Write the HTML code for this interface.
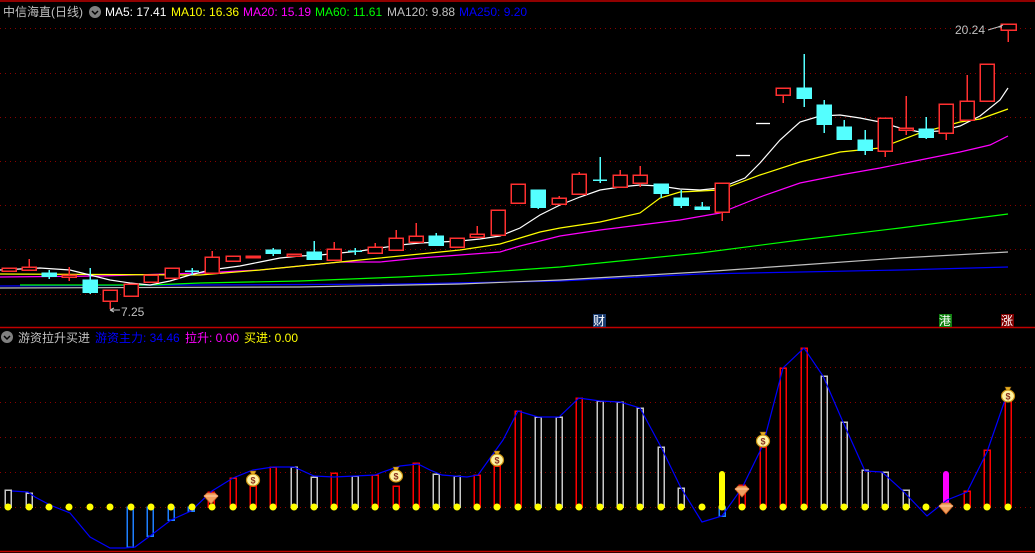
<!DOCTYPE html>
<html><head><meta charset="utf-8"><style>
html,body{margin:0;padding:0;background:#000;width:1035px;height:553px;overflow:hidden}
svg{display:block}
text{font-family:"Liberation Sans","Noto Sans CJK SC",sans-serif;font-size:12px}
</style></head><body>
<svg width="1035" height="553" viewBox="0 0 1035 553" xmlns="http://www.w3.org/2000/svg">
<defs>
<g id="bag"><path d="M-3,-9 L3,-9 L1.5,-6 L-1.5,-6 Z" fill="#e8b020" stroke="#8a5a10" stroke-width="0.6"/><ellipse cx="0" cy="0" rx="6.5" ry="6" fill="#fff3a0" stroke="#c89010" stroke-width="1.2"/><text x="0" y="3.5" text-anchor="middle" fill="#8a3020" style="font-size:9px;font-weight:bold">$</text></g>
<g id="dia"><path d="M-7,-3 L-4,-6 L4,-6 L7,-3 L0,5 Z" fill="#f0a060" stroke="#d06020" stroke-width="0.8"/><path d="M-7,-3 L7,-3" stroke="#ffd0a0" stroke-width="1"/></g>
</defs>
<line x1="0" y1="1" x2="1035" y2="1" stroke="#c00000" stroke-width="1.5"/>
<line x1="0" y1="327.5" x2="1035" y2="327.5" stroke="#c00000" stroke-width="1.5"/>
<line x1="0" y1="551.5" x2="1035" y2="551.5" stroke="#c00000" stroke-width="1.5"/>
<g stroke="#8a0000" stroke-width="1" stroke-dasharray="1,4">
<line x1="0" y1="28.5" x2="1035" y2="28.5"/><line x1="0" y1="73.5" x2="1035" y2="73.5"/><line x1="0" y1="117.5" x2="1035" y2="117.5"/><line x1="0" y1="161.5" x2="1035" y2="161.5"/><line x1="0" y1="205.5" x2="1035" y2="205.5"/><line x1="0" y1="249.5" x2="1035" y2="249.5"/><line x1="0" y1="294.5" x2="1035" y2="294.5"/>
<line x1="0" y1="367.5" x2="1035" y2="367.5"/><line x1="0" y1="402.5" x2="1035" y2="402.5"/><line x1="0" y1="437.5" x2="1035" y2="437.5"/><line x1="0" y1="472.5" x2="1035" y2="472.5"/><line x1="0" y1="507.5" x2="1035" y2="507.5"/>
</g>
<text x="3" y="16" fill="#c0c0c0">中信海直(日线)</text>
<circle cx="95" cy="12" r="6" fill="#808080"/><path d="M92,11 L95,14 L98,11" stroke="#000" stroke-width="1.5" fill="none"/>
<text x="105" y="16" fill="#fff">MA5: 17.41</text>
<text x="171" y="16" fill="#ffff00">MA10: 16.36</text>
<text x="243" y="16" fill="#ff00ff">MA20: 15.19</text>
<text x="315" y="16" fill="#00ff00">MA60: 11.61</text>
<text x="387" y="16" fill="#c0c0c0">MA120: 9.88</text>
<text x="459" y="16" fill="#0000ff">MA250: 9.20</text>
<g fill="none" stroke-width="1.2">
<polyline stroke="#0000ff" points="0,286 200,285 400,284 560,281 700,274 800,272 900,270 1008,267"/>
<polyline stroke="#c0c0c0" points="0,288 300,287 460,284 560,280 700,272 800,265 900,258 1008,252"/>
<polyline stroke="#00ff00" points="20,285 150,285 200,283 300,281 400,277 460,274 560,267 700,253 800,240 900,228 1008,214"/>
<polyline stroke="#ff00ff" points="0,277 100,276 200,273 260,270 300,266 340,262 380,262 420,258 460,255 500,252 520,246 560,236 600,230 640,225 680,220 720,213 760,197 800,183 840,175 880,168 920,160 960,152 990,145 1008,136"/>
<polyline stroke="#ffff00" points="0,274 200,275 260,270 300,266 340,262 380,258 420,254 460,250 500,244 520,238 540,232 560,228 600,222 640,213 660,198 680,192 720,190 760,175 800,162 840,152 880,148 920,133 960,122 980,119 1008,109"/>
<polyline stroke="#ffffff" points="0,270 40,268 70,270 90,275 110,280 130,283 150,285 170,281 190,275 210,270 240,266 260,262 280,258 300,256 320,255 340,253 360,251 380,248 400,245 420,243 440,242 460,241 480,239 500,236 520,228 540,215 560,205 580,197 600,190 620,187 640,185 660,186 680,189 700,190 720,188 745,178 760,163 780,140 800,122 820,116 840,115 860,118 880,122 900,128 920,132 940,131 960,126 980,116 1000,100 1008,88"/>
</g>
<g stroke="#ff3030" stroke-width="1.5" fill="#000" shape-rendering="crispEdges">
<rect x="2" y="268" width="14" height="3"/>
<line x1="29" y1="259" x2="29" y2="267"/><rect x="22" y="267" width="14" height="3"/>
<line x1="69" y1="267" x2="69" y2="281"/><rect x="62" y="275" width="14" height="2"/>
<line x1="110" y1="301" x2="110" y2="309"/><rect x="103" y="290" width="14" height="11"/>
<rect x="124" y="284" width="14" height="12"/>
<rect x="144" y="275" width="14" height="7"/>
<rect x="165" y="268" width="14" height="10"/>
<line x1="212" y1="251" x2="212" y2="257"/><rect x="205" y="257" width="14" height="16"/>
<rect x="226" y="256" width="14" height="5"/>
<rect x="246" y="256" width="14" height="1.5"/>
<rect x="287" y="254" width="14" height="2"/>
<line x1="334" y1="242" x2="334" y2="249"/><rect x="327" y="249" width="14" height="11"/>
<line x1="375" y1="243" x2="375" y2="247"/><rect x="368" y="247" width="14" height="6"/>
<line x1="396" y1="230" x2="396" y2="238"/><rect x="389" y="238" width="14" height="12"/>
<line x1="416" y1="223" x2="416" y2="236"/><rect x="409" y="236" width="14" height="6"/>
<rect x="450" y="238" width="14" height="9"/>
<line x1="477" y1="226" x2="477" y2="234"/><rect x="470" y="234" width="14" height="3"/>
<rect x="491" y="210" width="14" height="25"/>
<rect x="511" y="184" width="14" height="19"/>
<line x1="559" y1="196" x2="559" y2="198"/><rect x="552" y="198" width="14" height="6"/>
<line x1="579" y1="172" x2="579" y2="174"/><rect x="572" y="174" width="14" height="20"/>
<line x1="620" y1="170" x2="620" y2="175"/><rect x="613" y="175" width="14" height="12"/>
<line x1="640" y1="166" x2="640" y2="187"/><rect x="633" y="175" width="14" height="8"/>
<line x1="722" y1="212" x2="722" y2="221"/><rect x="715" y="183" width="14" height="29"/>
<line x1="783" y1="95" x2="783" y2="103"/><rect x="776" y="88" width="14" height="7"/>
<line x1="885" y1="151" x2="885" y2="157"/><rect x="878" y="118" width="14" height="33"/>
<line x1="906" y1="96" x2="906" y2="135"/><rect x="899" y="128" width="14" height="2"/>
<line x1="946" y1="133" x2="946" y2="140"/><rect x="939" y="104" width="14" height="29"/>
<line x1="967" y1="75" x2="967" y2="101"/><rect x="960" y="101" width="14" height="19"/>
<rect x="980" y="64" width="14" height="37"/>
<line x1="1008" y1="30" x2="1008" y2="42"/><rect x="1001" y="24" width="15" height="6"/>
</g>
<g stroke="#54ffff" stroke-width="1.5" fill="#54ffff" shape-rendering="crispEdges">
<line x1="49" y1="270" x2="49" y2="279"/><rect x="42" y="273" width="14" height="3"/>
<line x1="90" y1="268" x2="90" y2="294"/><rect x="83" y="280" width="14" height="12"/>
<line x1="192" y1="268" x2="192" y2="275"/><line x1="185" y1="271" x2="199" y2="271"/>
<line x1="273" y1="248" x2="273" y2="256"/><rect x="266" y="250" width="14" height="3"/>
<line x1="314" y1="241" x2="314" y2="260"/><rect x="307" y="252" width="14" height="7"/>
<line x1="355" y1="248" x2="355" y2="255"/><line x1="348" y1="251" x2="362" y2="251"/>
<line x1="436" y1="233" x2="436" y2="245"/><rect x="429" y="236" width="14" height="9"/>
<line x1="538" y1="190" x2="538" y2="209"/><rect x="531" y="190" width="14" height="17"/>
<line x1="600" y1="157" x2="600" y2="183"/><line x1="593" y1="180" x2="607" y2="180"/>
<line x1="661" y1="184" x2="661" y2="198"/><rect x="654" y="184" width="14" height="9"/>
<line x1="681" y1="190" x2="681" y2="208"/><rect x="674" y="198" width="14" height="7"/>
<line x1="702" y1="202" x2="702" y2="210"/><rect x="695" y="207" width="14" height="2"/>
<line x1="804" y1="54" x2="804" y2="107"/><rect x="797" y="88" width="14" height="10"/>
<line x1="824" y1="100" x2="824" y2="133"/><rect x="817" y="105" width="14" height="19"/>
<line x1="844" y1="120" x2="844" y2="139"/><rect x="837" y="127" width="14" height="12"/>
<line x1="865" y1="130" x2="865" y2="155"/><rect x="858" y="140" width="14" height="10"/>
<line x1="926" y1="117" x2="926" y2="139"/><rect x="919" y="129" width="14" height="8"/>
</g>
<line x1="736" y1="155.5" x2="750" y2="155.5" stroke="#fff" stroke-width="1.3"/>
<line x1="756" y1="123.5" x2="770" y2="123.5" stroke="#fff" stroke-width="1.3"/>
<text x="955" y="34" fill="#c0c0c0">20.24</text>
<path d="M988,30 L998,27 L1002,27 M998,27 L1003,25" stroke="#c0c0c0" fill="none"/>
<path d="M110,310 L120,310 M110,310 L114,308 M110,310 L114,312" stroke="#c0c0c0" fill="none"/>
<text x="121" y="316" fill="#c0c0c0">7.25</text>
<rect x="593" y="314" width="13" height="13" fill="#1a3c70"/><text x="593" y="325" fill="#fff">财</text>
<rect x="939" y="314" width="13" height="13" fill="#108010"/><text x="939" y="325" fill="#fff">港</text>
<rect x="1001" y="314" width="13" height="13" fill="#800000"/><text x="1001" y="325" fill="#fff">涨</text>
<circle cx="7" cy="337" r="6" fill="#808080"/><path d="M4,336 L7,339 L10,336" stroke="#000" stroke-width="1.5" fill="none"/>
<text x="18" y="342" fill="#c0c0c0">游资拉升买进</text>
<text x="95" y="342" fill="#0000ff">游资主力: 34.46</text>
<text x="185" y="342" fill="#ff00ff">拉升: 0.00</text>
<text x="244" y="342" fill="#ffff00">买进: 0.00</text>
<g fill="none" stroke-width="1.5" shape-rendering="crispEdges">
<g stroke="#c8c8c8">
<rect x="5" y="490" width="6" height="17"/><rect x="26" y="493" width="6" height="14"/>
<rect x="291" y="467" width="6" height="40"/><rect x="311" y="477" width="6" height="30"/><rect x="352" y="476" width="6" height="31"/>
<rect x="433" y="474" width="6" height="33"/><rect x="454" y="476" width="6" height="31"/>
<rect x="535" y="417" width="6" height="90"/><rect x="556" y="417" width="6" height="90"/>
<rect x="597" y="401" width="6" height="106"/><rect x="617" y="402" width="6" height="105"/><rect x="637" y="408" width="6" height="99"/>
<rect x="658" y="447" width="6" height="60"/><rect x="678" y="488" width="6" height="19"/>
<rect x="821" y="376" width="6" height="131"/><rect x="841" y="422" width="6" height="85"/><rect x="862" y="470" width="6" height="37"/><rect x="882" y="472" width="6" height="35"/><rect x="903" y="490" width="6" height="17"/>
</g>
<g stroke="#1e7fff">
<rect x="127" y="507" width="6" height="40"/><rect x="147" y="507" width="6" height="29"/><rect x="168" y="507" width="6" height="13"/><rect x="188" y="507" width="6" height="4"/><rect x="719" y="507" width="6" height="9"/>
</g>
<g stroke="#ff0000">
<rect x="208" y="492" width="6" height="15"/><rect x="230" y="478" width="6" height="29"/><rect x="250" y="486" width="6" height="21"/><rect x="270" y="467" width="6" height="40"/><rect x="331" y="473" width="6" height="34"/><rect x="372" y="475" width="6" height="32"/><rect x="393" y="486" width="6" height="21"/><rect x="413" y="463" width="6" height="44"/><rect x="474" y="475" width="6" height="32"/><rect x="494" y="466" width="6" height="41"/><rect x="515" y="411" width="6" height="96"/><rect x="576" y="398" width="6" height="109"/><rect x="739" y="485" width="6" height="22"/><rect x="760" y="447" width="6" height="60"/><rect x="780" y="368" width="6" height="139"/><rect x="801" y="348" width="6" height="159"/><rect x="964" y="491" width="6" height="16"/><rect x="984" y="450" width="6" height="57"/><rect x="1005" y="400" width="6" height="107"/>
</g>
</g>
<rect x="719" y="471" width="6" height="36" rx="3" fill="#ffff00"/>
<rect x="943" y="471" width="6" height="36" rx="3" fill="#ff00ff"/>
<polyline fill="none" stroke="#0000ff" stroke-width="1.2" points="12,491 28,492 35,497 50,505 70,513 90,537 110,548 125,548 135,547 150,536 171,520 191,511 212,491 233,478 253,470 273,467 294,467 314,476 334,477 355,476 375,475 380,473 400,466 418,464 430,470 442,475 467,477 478,475 503,440 518,411 538,417 559,417 579,398 600,401 620,402 640,408 661,447 681,488 702,522 722,516 742,488 763,445 783,368 804,348 823,376 843,422 865,471 882,472 902,490 927,516 947,500 967,492 987,452 1005,400"/>
<g fill="#ffff00">
<circle cx="8" cy="507" r="3.5"/><circle cx="29" cy="507" r="3.5"/><circle cx="49" cy="507" r="3.5"/><circle cx="69" cy="507" r="3.5"/><circle cx="90" cy="507" r="3.5"/><circle cx="110" cy="507" r="3.5"/><circle cx="131" cy="507" r="3.5"/><circle cx="151" cy="507" r="3.5"/><circle cx="171" cy="507" r="3.5"/><circle cx="192" cy="507" r="3.5"/><circle cx="212" cy="507" r="3.5"/><circle cx="233" cy="507" r="3.5"/><circle cx="253" cy="507" r="3.5"/><circle cx="273" cy="507" r="3.5"/><circle cx="294" cy="507" r="3.5"/><circle cx="314" cy="507" r="3.5"/><circle cx="334" cy="507" r="3.5"/><circle cx="355" cy="507" r="3.5"/><circle cx="375" cy="507" r="3.5"/><circle cx="396" cy="507" r="3.5"/><circle cx="416" cy="507" r="3.5"/><circle cx="436" cy="507" r="3.5"/><circle cx="457" cy="507" r="3.5"/><circle cx="477" cy="507" r="3.5"/><circle cx="497" cy="507" r="3.5"/><circle cx="518" cy="507" r="3.5"/><circle cx="538" cy="507" r="3.5"/><circle cx="559" cy="507" r="3.5"/><circle cx="579" cy="507" r="3.5"/><circle cx="600" cy="507" r="3.5"/><circle cx="620" cy="507" r="3.5"/><circle cx="640" cy="507" r="3.5"/><circle cx="661" cy="507" r="3.5"/><circle cx="681" cy="507" r="3.5"/><circle cx="702" cy="507" r="3.5"/><circle cx="722" cy="507" r="3.5"/><circle cx="742" cy="507" r="3.5"/><circle cx="763" cy="507" r="3.5"/><circle cx="783" cy="507" r="3.5"/><circle cx="804" cy="507" r="3.5"/><circle cx="824" cy="507" r="3.5"/><circle cx="844" cy="507" r="3.5"/><circle cx="865" cy="507" r="3.5"/><circle cx="885" cy="507" r="3.5"/><circle cx="906" cy="507" r="3.5"/><circle cx="926" cy="507" r="3.5"/><circle cx="967" cy="507" r="3.5"/><circle cx="987" cy="507" r="3.5"/><circle cx="1008" cy="507" r="3.5"/>
</g>
<use href="#bag" x="253" y="480"/><use href="#bag" x="396" y="476"/><use href="#bag" x="497" y="460"/><use href="#bag" x="763" y="441"/><use href="#bag" x="1008" y="396"/>
<use href="#dia" x="211" y="499"/><use href="#dia" x="742" y="492"/><use href="#dia" x="946" y="509"/>
</svg>
</body></html>
